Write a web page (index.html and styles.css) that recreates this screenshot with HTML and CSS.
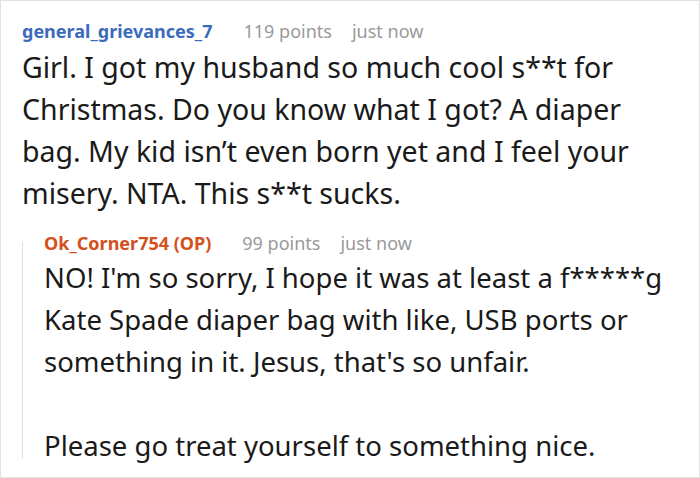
FILE: index.html
```html
<!DOCTYPE html>
<html>
<head>
<meta charset="utf-8">
<link rel="stylesheet" href="styles.css">
</head>
<body>
<div class="frame">
  <div class="comment">
    <div class="meta">
      <span class="user">general_grievances_7</span>
      <span class="points">119 points</span>
      <span class="time">just now</span>
    </div>
    <div class="body main">
      <p>Girl. I got my husband so much cool s**t for Christmas. Do you know what I got? A diaper bag. My kid isn’t even born yet and I feel your misery. NTA. This s**t sucks.</p>
    </div>
    <div class="reply">
      <div class="meta">
        <span class="user op">Ok_Corner754 (OP)</span>
        <span class="points">99 points</span>
        <span class="time">just now</span>
      </div>
      <div class="body">
        <p>NO! I'm so sorry, I hope it was at least a f*****g Kate Spade diaper bag with like, USB ports or something in it. Jesus, that's so unfair.</p>
        <p class="gap">Please go treat yourself to something nice.</p>
      </div>
    </div>
  </div>
</div>
</body>
</html>
```

FILE: styles.css
```css
html, body {
  margin: 0;
  padding: 0;
  background: #fff;
}
.frame {
  box-sizing: border-box;
  width: 700px;
  height: 478px;
  border: 1px solid #e2e2e2;
  overflow: hidden;
  font-family: "Noto Sans", sans-serif;
  color: #1a1a1a;
}
.comment {
  padding: 17px 6px 0 21px;
}
.meta {
  display: flex;
  align-items: baseline;
  font-size: 18px;
  line-height: 26px;
  white-space: nowrap;
}
.user {
  font-weight: 700;
  color: #3b6bbd;
}
.user.op {
  color: #d4501c;
}
.points {
  margin-left: 31px;
  color: #9a9a9a;
}
.time {
  margin-left: 20px;
  color: #9a9a9a;
}
.body {
  margin-top: 2px;
  font-size: 28.5px;
  line-height: 42px;
}
.body.main {
  padding-right: 30px;
}
.body p {
  margin: 0;
}
.body p.gap {
  margin-top: 42px;
}
.reply {
  position: relative;
  margin-top: 16px;
  padding-left: 22px;
}
.reply::before {
  content: "";
  position: absolute;
  left: 0;
  top: 12px;
  bottom: 8px;
  width: 1px;
  background: #dedede;
}
.reply .body {
  margin-top: 1px;
  font-size: 27.5px;
}
```
